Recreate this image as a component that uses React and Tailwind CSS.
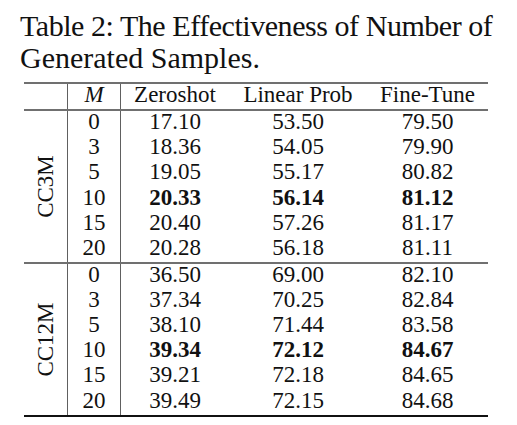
import React from "react";

const groups = [
  {
    name: "CC3M",
    rows: [
      ["0", "17.10", "53.50", "79.50"],
      ["3", "18.36", "54.05", "79.90"],
      ["5", "19.05", "55.17", "80.82"],
      ["10", "20.33", "56.14", "81.12", true],
      ["15", "20.40", "57.26", "81.17"],
      ["20", "20.28", "56.18", "81.11"],
    ],
  },
  {
    name: "CC12M",
    rows: [
      ["0", "36.50", "69.00", "82.10"],
      ["3", "37.34", "70.25", "82.84"],
      ["5", "38.10", "71.44", "83.58"],
      ["10", "39.34", "72.12", "84.67", true],
      ["15", "39.21", "72.18", "84.65"],
      ["20", "39.49", "72.15", "84.68"],
    ],
  },
];

export default function App() {
  return (
    <div
      className="w-[517px] h-[425px] bg-white text-black overflow-hidden"
      style={{ fontFamily: '"Liberation Serif", "Times New Roman", serif' }}
    >
      <div className="pl-[20px] pt-[10px] text-[30px] leading-[32px] text-[#111]">
        <div className="tracking-[-0.45px] whitespace-nowrap">Table 2: The Effectiveness of Number of</div>
        <div className="whitespace-nowrap">Generated Samples.</div>
      </div>
      <div className="ml-[24px] mt-[8px] w-[464px] text-[23px] leading-none text-[#111]">
        <div className="h-[2px] bg-[#707070]" />
        <div className="flex h-[25px] items-center">
          <div className="w-[44px] h-full border-r-[1.5px] border-[#606060]" />
          <div className="w-[53px] h-full flex items-center justify-center pb-[4px] border-r-[1.5px] border-[#606060] italic">
            M
          </div>
          <div className="w-[108px] text-center pb-[4px]">Zeroshot</div>
          <div className="w-[138px] text-center pb-[4px]">Linear Prob</div>
          <div className="w-[121px] text-center pb-[4px]">Fine-Tune</div>
        </div>
        {groups.map((g, gi) => (
          <React.Fragment key={g.name}>
            <div className={gi === 0 ? "h-[2px] bg-[#707070]" : "h-[1.5px] bg-[#707070]"} />
            <div className="flex">
              <div className="w-[44px] border-r-[1.5px] border-[#606060] flex items-center justify-center">
                <div className="-rotate-90 whitespace-nowrap">{g.name}</div>
              </div>
              <div className="flex-1">
                {g.rows.map((r) => (
                  <div key={r[0]} className={"flex h-[25.2px] items-center " + (r[4] ? "font-bold" : "")}>
                    <div className="w-[53px] h-full flex items-center justify-center pb-[4px] border-r-[1.5px] border-[#606060] font-normal">
                      {r[0]}
                    </div>
                    <div className="w-[108px] text-center pb-[4px]">{r[1]}</div>
                    <div className="w-[138px] text-center pb-[4px]">{r[2]}</div>
                    <div className="w-[121px] text-center pb-[4px]">{r[3]}</div>
                  </div>
                ))}
              </div>
            </div>
          </React.Fragment>
        ))}
        <div className="h-[2px] bg-[#111]" />
      </div>
    </div>
  );
}
